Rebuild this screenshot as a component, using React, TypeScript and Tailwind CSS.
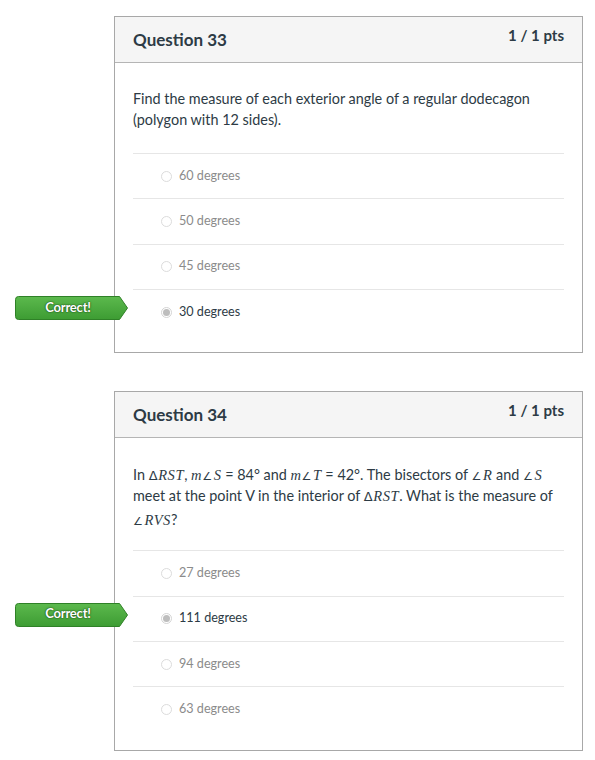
import React from "react";

const lato = { fontFamily: "Lato, 'Noto Sans', sans-serif" };

function Badge() {
  return (
    <div className="absolute left-[-118px] top-[6px] w-[114px] h-[24px]">
      <svg width="114" height="24" viewBox="0 0 114 24" className="absolute inset-0">
        <defs>
          <linearGradient id="g" x1="0" y1="0" x2="0" y2="1">
            <stop offset="0" stopColor="#5cb94d" />
            <stop offset="1" stopColor="#3d9c33" />
          </linearGradient>
        </defs>
        <path
          d="M3.5 0.5 H104.5 L112.5 12 L104.5 23.5 H3.5 Q0.5 23.5 0.5 20.5 V3.5 Q0.5 0.5 3.5 0.5 Z"
          fill="url(#g)"
          stroke="#2f8127"
          strokeWidth="1"
        />
      </svg>
      <div
        className="relative w-[106px] h-[23px] flex items-center justify-center text-white font-bold text-[13px] tracking-[-0.2px]"
        style={{ ...lato, textShadow: "0 0 1px #1d4d17, 0 0 2px #1d4d17" }}
      >
        Correct!
      </div>
    </div>
  );
}

function Radio({ selected }: { selected?: boolean }) {
  return selected ? (
    <span className="w-[11px] h-[11px] rounded-full border border-[#d4d4d4] bg-white flex items-center justify-center">
      <span className="w-[7px] h-[7px] rounded-full bg-[#bdbdbd]" />
    </span>
  ) : (
    <span className="w-[11px] h-[11px] rounded-full border border-[#dcdcdc] bg-white" />
  );
}

function Answer({ text, selected, correct }: { text: string; selected?: boolean; correct?: boolean }) {
  return (
    <div className="relative h-[45.33px] border-t border-[#e6e6e6] flex items-center pl-[28px]">
      {correct && <Badge />}
      <Radio selected={selected} />
      <span
        className={`ml-[7px] text-[12.6px] ${selected ? "text-[#2d3b45]" : "text-[#8b8b8b]"}`}
        style={lato}
      >
        {text}
      </span>
    </div>
  );
}

function M({ children }: { children: React.ReactNode }) {
  return (
    <span
      className="italic text-[14.5px] leading-none tracking-[0.6px]"
      style={{ fontFamily: "'Liberation Serif', 'DejaVu Serif', serif" }}
    >
      {children}
    </span>
  );
}

function Ang() {
  return (
    <span className="text-[11px] leading-none not-italic mr-[1px]" style={{ fontFamily: "'DejaVu Sans', sans-serif" }}>
      ∠
    </span>
  );
}

function Tri() {
  return (
    <span className="text-[13px] leading-none not-italic" style={{ fontFamily: "'DejaVu Sans', sans-serif" }}>
      Δ
    </span>
  );
}

function Card({ title, children }: { title: string; children: React.ReactNode }) {
  return (
    <div className="w-[469px] border border-[#a8a8a8] bg-white" style={lato}>
      <div className="h-[46px] bg-[#f5f5f5] border-b border-[#b5b5b5] flex justify-between px-[18px]">
        <div className="pt-[10px] text-[17px] font-bold text-[#2d3b45]">{title}</div>
        <div className="pt-[7px] text-[15px] font-bold text-[#2d3b45]">1 / 1 pts</div>
      </div>
      <div className="px-[18px] pb-[18px]">{children}</div>
    </div>
  );
}

export default function App() {
  return (
    <div className="w-[595px] h-[760px] bg-white pl-[114px] pt-[16px]">
      <Card title="Question 33">
        <div className="pt-[25px] pb-[23px] text-[14.4px] leading-[21px] text-[#2d3b45]">
          Find the measure of each exterior angle of a regular dodecagon (polygon with 12 sides).
        </div>
        <Answer text="60 degrees" />
        <Answer text="50 degrees" />
        <Answer text="45 degrees" />
        <Answer text="30 degrees" selected correct />
      </Card>
      <div className="h-[38px]" />
      <Card title="Question 34">
        <div className="pt-[26px] pb-[20px] text-[14.4px] leading-[21px] text-[#2d3b45]">
          In <M><Tri />RST</M>, <M>m<Ang />S</M> = 84° and <M>m<Ang />T</M> = 42°. The bisectors of{" "}
          <M><Ang />R</M> and <M><Ang />S</M>
          <br />
          meet at the point V in the interior of <M><Tri />RST</M>. What is the measure of
          <br />
          <span className="inline-block mt-[3px]">
            <M><Ang />RVS</M>?
          </span>
        </div>
        <Answer text="27 degrees" />
        <Answer text="111 degrees" selected correct />
        <Answer text="94 degrees" />
        <Answer text="63 degrees" />
      </Card>
    </div>
  );
}
